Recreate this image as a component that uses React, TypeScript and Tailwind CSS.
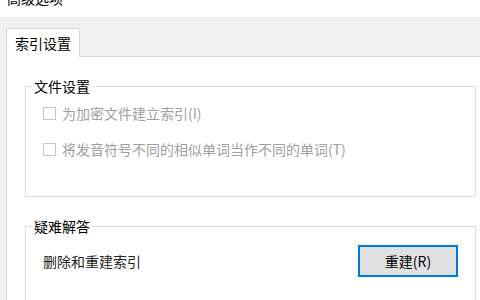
import React from 'react';

const font = { fontFamily: '"Microsoft YaHei", "Noto Sans CJK SC", "Noto Sans", sans-serif' };

const Checkbox: React.FC<{ label: string }> = ({ label }) => (
    <label className="flex items-center h-[20px] gap-[6px] text-[14px] text-[#a0a0a0]">
        <span className="w-[13px] h-[13px] border border-[#c6c6c6] bg-white shrink-0" />
        <span className="leading-[20px]">{label}</span>
    </label>
);

export default function App() {
    return (
        <div className="w-[480px] h-[300px] overflow-hidden bg-white flex flex-col" style={font}>
            {/* window title, scrolled out of view */}
            <div className="h-[17px] overflow-hidden bg-white shrink-0">
                <div className="mt-[-12px] ml-[7px] text-[14px] leading-[20px] text-black">高级选项</div>
            </div>

            <div className="flex-1 bg-[#f0f0f0] pt-[11px] pl-[6px] flex flex-col">
                {/* tab strip */}
                <div className="flex">
                    <div className="relative z-10 -mb-px w-[74px] h-[29px] bg-white border border-b-0 border-[#d9d9d9] flex items-center justify-center text-[14px] text-black">
                        索引设置
                    </div>
                </div>

                {/* tab page */}
                <div className="flex-1 bg-white border-t border-l border-[#d9d9d9] pt-[19px] pl-[18px]">
                    <fieldset className="w-[451px] h-[121px] border border-[#dcdcdc] pl-[6px] pr-0 pb-0 pt-0 m-0">
                        <legend className="px-[2px] text-[14px] leading-[20px] text-black">文件设置</legend>
                        <div className="ml-[11px] mt-[7px] flex flex-col gap-[16px]">
                            <Checkbox label="为加密文件建立索引(I)" />
                            <Checkbox label="将发音符号不同的相似单词当作不同的单词(T)" />
                        </div>
                    </fieldset>

                    <fieldset className="mt-[19px] w-[451px] h-[120px] border border-[#dcdcdc] pl-[6px] pr-0 pb-0 pt-0 m-0">
                        <legend className="px-[2px] text-[14px] leading-[20px] text-black">疑难解答</legend>
                        <div className="ml-[11px] mt-[9px] mr-[17px] flex items-center justify-between">
                            <span className="text-[14px] text-[#222]">删除和重建索引</span>
                            <button className="w-[100px] h-[32px] border-2 border-[#0078d7] bg-[#e1e1e1] text-[14px] text-black">
                                重建(R)
                            </button>
                        </div>
                    </fieldset>
                </div>
            </div>
        </div>
    );
}
